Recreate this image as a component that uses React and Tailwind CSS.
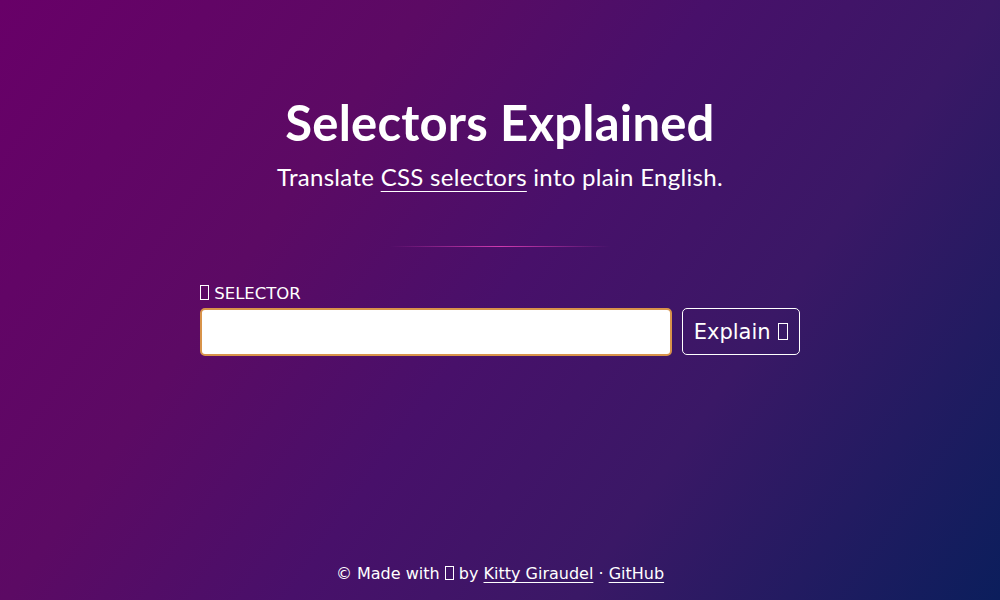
import { useState } from 'react';

const Tofu = ({ className }) => (
  <span className={`inline-block border border-current align-baseline ${className}`} />
);

const App = () => {
  const [selector, setSelector] = useState('');

  return (
    <div
      className="min-h-screen h-[600px] flex flex-col items-center text-white bg-[linear-gradient(125deg,#680068_0%,#5c0a64_30%,#48106a_50%,#3a1866_70%,#0b1e5c_100%)]"
      style={{ fontFamily: '"DejaVu Sans", sans-serif' }}
    >
      <header className="pt-[92px] text-center" style={{ fontFamily: 'Lato, sans-serif' }}>
        <h1 className="text-[49px] leading-[60px] font-bold tracking-[0.2px]">
          Selectors Explained
        </h1>
        <p className="mt-[8px] text-[24px] leading-[34px] tracking-[0.3px]">
          Translate{' '}
          <a href="#" className="underline underline-offset-[5px] decoration-1">
            CSS selectors
          </a>{' '}
          into plain English.
        </p>
      </header>

      <div className="mt-[52px] w-[220px] h-px bg-[linear-gradient(to_right,transparent,#d03ab0_50%,transparent)]" />

      <main className="mt-[37px] w-[600px]">
        <label htmlFor="selector" className="block text-[16.5px] leading-[20px] mb-[4px]">
          <Tofu className="w-[9px] h-[15px] -mb-[1px]" /> SELECTOR
        </label>
        <div className="flex gap-[10px]">
          <input
            id="selector"
            value={selector}
            onChange={(e) => setSelector(e.target.value)}
            autoFocus
            className="flex-1 h-[48px] rounded-[5px] bg-white text-black px-[10px] border-2 border-[#d8934a] outline-none caret-black"
          />
          <button className="w-[118px] h-[47px] rounded-[5px] border border-white text-[21px] leading-[24px] bg-transparent whitespace-nowrap">
            Explain <Tofu className="w-[10px] h-[17px] ml-[1px] -mb-[1px]" />
          </button>
        </div>
      </main>

      <footer className="mt-auto pb-[16px] text-[16px] leading-[20px]">
        © Made with <Tofu className="w-[9px] h-[14px] -mb-[1px]" /> by{' '}
        <a href="#" className="underline underline-offset-[3px]">Kitty Giraudel</a> ·{' '}
        <a href="#" className="underline underline-offset-[3px]">GitHub</a>
      </footer>
    </div>
  );
};

export default App;
